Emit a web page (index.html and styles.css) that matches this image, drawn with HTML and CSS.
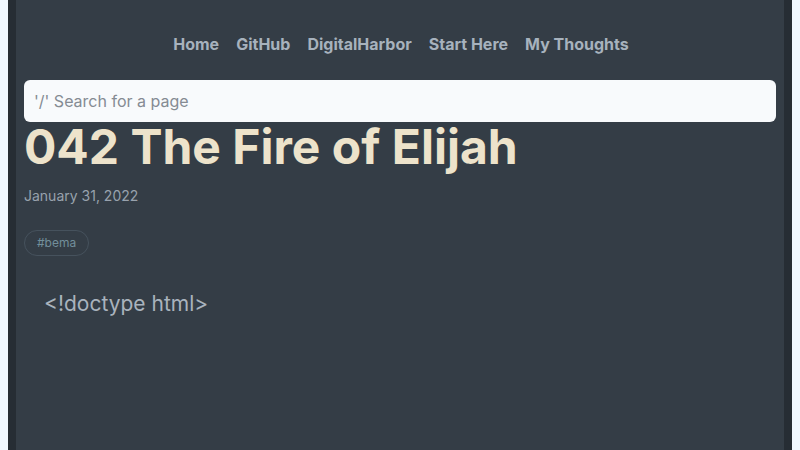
FILE: index.html
```html
<!DOCTYPE html>
<html lang="en">
<head>
<meta charset="utf-8">
<title>042 The Fire of Elijah</title>
<link rel="stylesheet" href="styles.css">
</head>
<body>
<div class="page">
  <nav class="nav">
    <a href="#">Home</a>
    <a href="#">GitHub</a>
    <a href="#">DigitalHarbor</a>
    <a href="#">Start Here</a>
    <a href="#">My Thoughts</a>
  </nav>
  <input class="search" type="text" placeholder="'/' Search for a page">
  <h1 class="title">042 The Fire of Elijah</h1>
  <div class="date">January 31, 2022</div>
  <div class="tags"><span class="tag">#bema</span></div>
  <div class="content">&lt;!doctype html&gt;</div>
</div>
</body>
</html>
```
FILE: styles.css
```css
html, body { height: 100%; }
body {
  margin: 0;
  padding: 0 8px;
  background: #f0f8ff;
  font-family: Inter, "Noto Sans", sans-serif;
  box-sizing: border-box;
}
.page {
  height: 100%;
  box-sizing: border-box;
  background: #343d46;
  border-left: 8px solid #262d34;
  border-right: 8px solid #262d34;
  padding: 32px 8px 0;
  display: flex;
  flex-direction: column;
}
.nav {
  display: flex;
  justify-content: center;
  gap: 17px;
  height: 24px;
  align-items: center;
  padding-left: 2px;
}
.nav a {
  color: #a7b2bd;
  font-weight: 700;
  font-size: 16px;
  text-decoration: none;
}
.search {
  margin-top: 24px;
  height: 42px;
  box-sizing: border-box;
  border: none;
  border-radius: 6px;
  background: #f8fafc;
  padding: 0 10px;
  font-family: inherit;
  font-size: 16px;
  color: #333;
  outline: none;
}
.search::placeholder { color: #858b93; }
.title {
  margin: 0;
  font-size: 48px;
  font-weight: 700;
  line-height: 50px;
  color: #ede3cb;
}
.date {
  margin-top: 14px;
  font-size: 14px;
  color: #98a2ad;
  line-height: 20px;
}
.tags { margin-top: 24px; display: flex; }
.tag {
  border: 1px solid #46525d;
  border-radius: 13px;
  padding: 0 12px;
  height: 24px;
  line-height: 24px;
  font-size: 12px;
  color: #728f9b;
}
.content {
  margin-top: 34px;
  padding-left: 20px;
  font-size: 21px;
  color: #a9b3bd;
  line-height: 28px;
}
```
